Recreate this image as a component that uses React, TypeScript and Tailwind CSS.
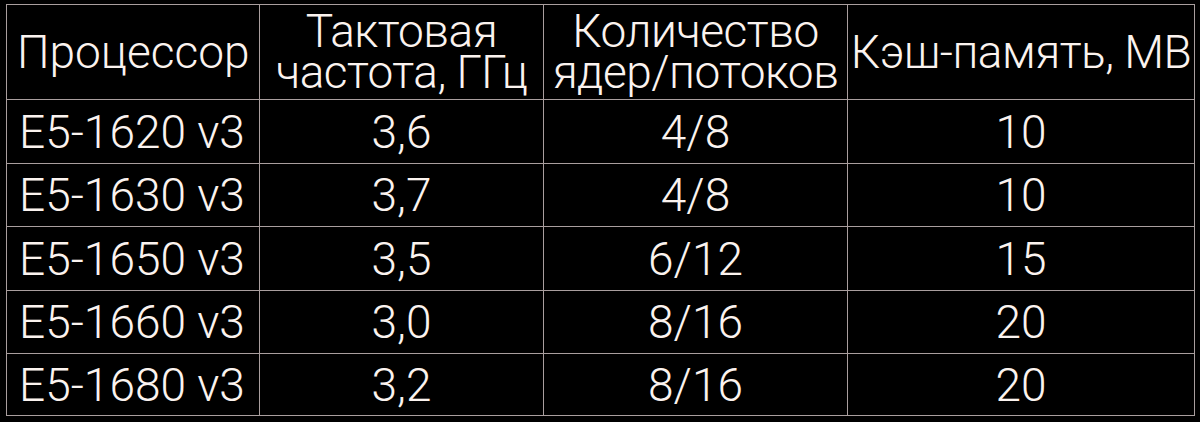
const header = [
  ["Процессор"],
  ["Тактовая", "частота, ГГц"],
  ["Количество", "ядер/потоков"],
  ["Кэш-память, МВ"],
];

const rows = [
  ["E5-1620 v3", "3,6", "4/8", "10"],
  ["E5-1630 v3", "3,7", "4/8", "10"],
  ["E5-1650 v3", "3,5", "6/12", "15"],
  ["E5-1660 v3", "3,0", "8/16", "20"],
  ["E5-1680 v3", "3,2", "8/16", "20"],
];

const rowHeights = ["h-[64px]", "h-[63px]", "h-[64px]", "h-[63px]", "h-[62px]"];

const cell = "flex items-center border-r border-b border-[#a99e9e]";

export default function App() {
  return (
    <div
      className="w-[1200px] h-[422px] bg-black pl-[6px] pt-[4px] text-[#fbf3ef] text-[46px] font-light leading-none"
      style={{ fontFamily: 'Roboto, "Liberation Sans", Arial, sans-serif' }}
    >
      <div className="grid grid-cols-[253px_284px_304px_347px] w-[1189px] border-l border-t border-[#a99e9e]">
        {header.map((lines, i) => (
          <div
            key={i}
            className={`${cell} h-[95px] flex-col justify-center whitespace-nowrap ${
              i === 0 ? "items-start pl-[10px]" : "items-center tracking-[-0.5px]"
            }`}
          >
            {lines.map((l) => (
              <span key={l} className="leading-[41px]">
                {l}
              </span>
            ))}
          </div>
        ))}
        {rows.map((r, ri) =>
          r.map((v, ci) => (
            <div
              key={`${ri}-${ci}`}
              className={`${cell} ${rowHeights[ri]} whitespace-nowrap ${
                ci === 0 ? "justify-start pl-[12px]" : "justify-center"
              }`}
            >
              {v}
            </div>
          ))
        )}
      </div>
    </div>
  );
}
